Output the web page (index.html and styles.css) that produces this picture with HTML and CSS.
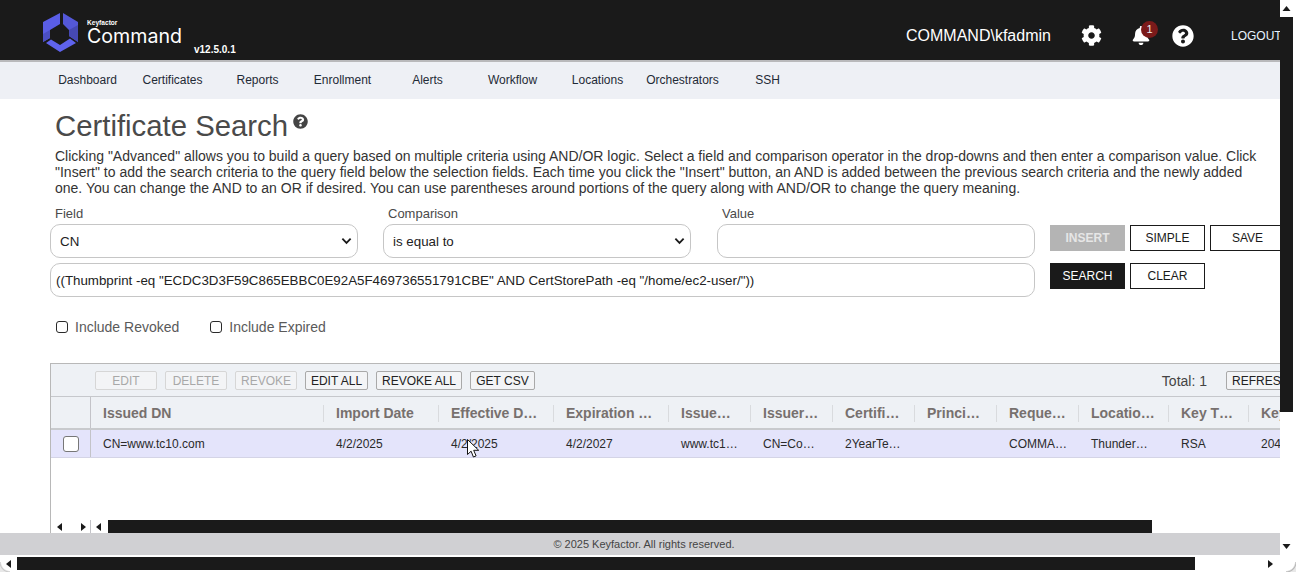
FILE: index.html
```html
<!DOCTYPE html>
<html lang="en">
<head>
<meta charset="utf-8">
<title>Certificate Search</title>
<link rel="stylesheet" href="styles.css">
</head>
<body>
<svg class="defs" width="0" height="0" aria-hidden="true">
  <symbol id="i-help" viewBox="0 0 512 512"><path d="M504 256c0 136.997-111.043 248-248 248S8 392.997 8 256C8 119.083 119.043 8 256 8s248 111.083 248 248zM262.655 90c-54.497 0-89.255 22.957-116.549 63.758-3.536 5.286-2.353 12.415 2.715 16.258l34.699 26.31c5.205 3.947 12.621 3.008 16.665-2.122 17.864-22.658 30.113-35.797 57.303-35.797 20.429 0 45.698 13.148 45.698 32.958 0 14.976-12.363 22.667-32.534 33.976C247.128 238.528 216 254.941 216 296v4c0 6.627 5.373 12 12 12h56c6.627 0 12-5.373 12-12v-1.333c0-28.462 83.186-29.647 83.186-106.667 0-58.002-60.165-102-116.531-102zM256 338c-25.365 0-46 20.635-46 46 0 25.364 20.635 46 46 46s46-20.636 46-46c0-25.365-20.635-46-46-46z"/></symbol>
</svg>
<div class="window">
  <div class="main">
    <header class="topbar">
      <div class="brand">
        <svg class="logo" viewBox="0 0 36 40" aria-hidden="true">
          <polygon points="18,1 18,12 8,18 8,26 1,30 1,10" fill="#5a5ee6"/>
          <polygon points="1,22 8,18 8,26 1,30" fill="#4b4fc4"/>
          <polygon points="21,1 36,10 36,30 27,24 27,18 21,12" fill="#5458d8"/>
          <polygon points="27,18 36,13 36,30 27,24" fill="#4649b4"/>
          <polygon points="4,31 9,27.5 18,33 28,26.5 34,31 18,40" fill="#5f63ee"/>
        </svg>
        <div class="wordmark">
          <span class="wm-small">Keyfactor</span>
          <span class="wm-big">Command</span>
        </div>
        <span class="version">v12.5.0.1</span>
      </div>
      <div class="userbar">
        <span class="username">COMMAND\kfadmin</span>
        <svg class="ico-gear" viewBox="0 0 512 512" aria-hidden="true"><path d="M487.4 315.7l-42.6-24.6c4.3-23.2 4.3-47 0-70.2l42.6-24.6c4.9-2.8 7.1-8.6 5.5-14-11.1-35.6-30-67.8-54.7-94.6-3.8-4.1-10-5.1-14.8-2.3L380.8 110c-17.9-15.4-38.5-27.3-60.8-35.1V25.8c0-5.6-3.9-10.5-9.4-11.7-36.7-8.2-74.3-7.8-109.2 0-5.5 1.2-9.4 6.1-9.4 11.7V75c-22.2 7.9-42.8 19.8-60.8 35.1L88.7 85.5c-4.9-2.8-11-1.9-14.8 2.3-24.7 26.7-43.6 58.9-54.7 94.6-1.7 5.4.6 11.2 5.5 14L67.3 221c-4.3 23.2-4.3 47 0 70.2l-42.6 24.6c-4.9 2.8-7.1 8.6-5.5 14 11.1 35.6 30 67.8 54.7 94.6 3.8 4.1 10 5.1 14.8 2.3l42.6-24.6c17.9 15.4 38.5 27.3 60.8 35.1v49.2c0 5.6 3.9 10.5 9.4 11.7 36.7 8.2 74.3 7.8 109.2 0 5.5-1.2 9.4-6.1 9.4-11.7v-49.2c22.2-7.9 42.8-19.8 60.8-35.1l42.6 24.6c4.9 2.8 11 1.9 14.8-2.3 24.7-26.7 43.6-58.9 54.7-94.6 1.5-5.5-.7-11.3-5.6-14.1zM256 336c-44.1 0-80-35.9-80-80s35.9-80 80-80 80 35.9 80 80-35.9 80-80 80z"/></svg>
        <span class="bell">
          <svg class="ico-bell" viewBox="0 0 448 512" aria-hidden="true"><path d="M224 512c35.32 0 63.97-28.65 63.97-64H160.03c0 35.35 28.65 64 63.97 64zm215.39-149.71c-19.32-20.76-55.47-51.99-55.47-154.29 0-77.7-54.48-139.9-127.94-155.16V32c0-17.67-14.32-32-31.98-32s-31.98 14.33-31.98 32v20.84C118.56 68.1 64.08 130.3 64.08 208c0 102.3-36.15 133.53-55.47 154.29-6 6.45-8.66 14.16-8.61 21.71.11 16.4 12.98 32 32.1 32h383.8c19.12 0 32-15.6 32.1-32 .05-7.55-2.61-15.27-8.61-21.71z"/></svg>
          <span class="badge">1</span>
        </span>
        <svg class="ico-help"><use href="#i-help"/></svg>
        <span class="logout">LOGOUT</span>
      </div>
    </header>
    <nav class="nav">
      <a>Dashboard</a><a>Certificates</a><a>Reports</a><a>Enrollment</a><a>Alerts</a><a>Workflow</a><a>Locations</a><a>Orchestrators</a><a>SSH</a>
    </nav>
    <main class="content">
      <div class="intro">
        <h1 class="title">Certificate Search<svg class="title-help"><use href="#i-help"/></svg></h1>
        <p class="desc">Clicking "Advanced" allows you to build a query based on multiple criteria using AND/OR logic. Select a field and comparison operator in the drop-downs and then enter a comparison value. Click "Insert" to add the search criteria to the query field below the selection fields. Each time you click the "Insert" button, an AND is added between the previous search criteria and the newly added one. You can change the AND to an OR if desired. You can use parentheses around portions of the query along with AND/OR to change the query meaning.</p>
      </div>
      <div class="form">
        <div class="fields">
          <label class="fld-label">Field</label>
          <label class="fld-label">Comparison</label>
          <label class="fld-label">Value</label>
          <div class="ctl ctl-select"><span>CN</span><svg class="chev" viewBox="0 0 12 8" aria-hidden="true"><path d="M1.5 1.5 6 6l4.5-4.5" fill="none" stroke="#1a1a1a" stroke-width="2"/></svg></div>
          <div class="ctl ctl-select"><span>is equal to</span><svg class="chev" viewBox="0 0 12 8" aria-hidden="true"><path d="M1.5 1.5 6 6l4.5-4.5" fill="none" stroke="#1a1a1a" stroke-width="2"/></svg></div>
          <div class="ctl ctl-value"></div>
          <div class="ctl ctl-query">((Thumbprint -eq "ECDC3D3F59C865EBBC0E92A5F469736551791CBE" AND CertStorePath -eq "/home/ec2-user/"))</div>
        </div>
        <div class="actions">
          <button class="btn btn-off">INSERT</button>
          <button class="btn">SIMPLE</button>
          <button class="btn">SAVE</button>
          <button class="btn btn-dark">SEARCH</button>
          <button class="btn">CLEAR</button>
        </div>
      </div>
      <div class="checks">
        <label class="chk"><span class="box"></span>Include Revoked</label>
        <label class="chk"><span class="box"></span>Include Expired</label>
      </div>
      <section class="grid">
        <div class="toolbar">
          <button class="tb tb-off">EDIT</button>
          <button class="tb tb-off">DELETE</button>
          <button class="tb tb-off">REVOKE</button>
          <button class="tb tb-w1">EDIT ALL</button>
          <button class="tb tb-w2">REVOKE ALL</button>
          <button class="tb tb-w3">GET CSV</button>
          <span class="total">Total: 1</span>
          <button class="tb tb-refresh">REFRESH</button>
        </div>
        <div class="cols head">
          <div class="cell-check"></div>
          <div class="th">Issued DN</div>
          <div class="th">Import Date</div>
          <div class="th">Effective D…</div>
          <div class="th">Expiration …</div>
          <div class="th">Issue…</div>
          <div class="th">Issuer…</div>
          <div class="th">Certifi…</div>
          <div class="th">Princi…</div>
          <div class="th">Reque…</div>
          <div class="th">Locatio…</div>
          <div class="th">Key T…</div>
          <div class="th">Key</div>
        </div>
        <div class="cols row">
          <div class="cell-check"><span class="rowbox"></span></div>
          <div class="td td-first">CN=www.tc10.com</div>
          <div class="td">4/2/2025</div>
          <div class="td">4/2/2025</div>
          <div class="td">4/2/2027</div>
          <div class="td">www.tc1…</div>
          <div class="td">CN=Co…</div>
          <div class="td">2YearTe…</div>
          <div class="td"></div>
          <div class="td">COMMA…</div>
          <div class="td">Thunder…</div>
          <div class="td">RSA</div>
          <div class="td">2048</div>
        </div>
        <div class="grid-space"></div>
        <div class="grid-scroll">
          <div class="gs-pager">
            <svg class="tri" viewBox="0 0 6 8"><path d="M5 0v8L0 4z"/></svg>
            <svg class="tri" viewBox="0 0 6 8"><path d="M1 0v8l5-4z"/></svg>
          </div>
          <div class="gs-left"><svg class="tri" viewBox="0 0 6 8"><path d="M5 0v8L0 4z"/></svg></div>
          <div class="gs-thumb"></div>
        </div>
      </section>
      <svg class="cursor" viewBox="0 0 12 19" aria-hidden="true"><path d="M.5.5v15l3.6-3.3 2.3 5.8 2.7-1.1-2.4-5.6h5z" fill="#fff" stroke="#111" stroke-width="1"/></svg>
    </main>
    <footer class="footer">© 2025 Keyfactor. All rights reserved.</footer>
  </div>
  <aside class="vscroll">
    <svg class="arrow-v" viewBox="0 0 8 5"><path d="M0 5h8L4 0z"/></svg>
    <div class="v-thumb"></div>
    <svg class="arrow-v" viewBox="0 0 8 5"><path d="M0 0h8L4 5z"/></svg>
  </aside>
  <div class="hscroll">
    <svg class="arrow-h" viewBox="0 0 5 8"><path d="M5 0v8L0 4z"/></svg>
    <div class="h-thumb"></div>
    <svg class="arrow-h" viewBox="0 0 5 8"><path d="M0 0v8l5-4z"/></svg>
  </div>
  <div class="corner corner-l"></div>
  <div class="corner corner-r"></div>
</div>
</body>
</html>
```

FILE: styles.css
```css
* { box-sizing: border-box; }
html, body { margin: 0; padding: 0; height: 100%; overflow: hidden; background: #fff; }
body { font-family: "Liberation Sans", Arial, sans-serif; color: #333; }
.defs { display: block; height: 0; }

.window {
  position: relative;
  display: grid;
  grid-template-columns: 1280px 16px;
  grid-template-rows: 555px 17px;
  width: 1296px;
  height: 572px;
}
.main { display: flex; flex-direction: column; overflow: hidden; min-width: 0; }

/* Top bar */
.topbar {
  flex: none;
  height: 62px;
  background: #1a1a1a;
  border-bottom: 2px solid #b9b9bb;
  display: flex;
  justify-content: space-between;
  color: #fff;
  width: 1296px;
}
.brand { display: flex; padding-left: 42px; }
.logo { width: 36px; height: 40px; margin-top: 12px; }
.wordmark { display: flex; flex-direction: column; margin-left: 9px; padding-top: 19px; width: 107px; }
.wm-small { font-size: 6.6px; line-height: 7px; font-weight: bold; }
.wm-big { font-size: 19.6px; line-height: 20px; font-family: Inter, "Liberation Sans", sans-serif; }
.version { font-size: 10px; font-weight: bold; margin-top: 44px; line-height: 12px; }
.userbar { display: flex; align-items: center; height: 70px; width: 400px; flex: none; }
.username { font-size: 16px; margin: 1px 0 0 10px; width: 175px; flex: none; }
.ico-gear { width: 21px; height: 21px; fill: #fff; flex: none; }
.bell { position: relative; display: block; width: 18px; height: 19px; margin: 1px 0 0 30px; flex: none; }
.ico-bell { width: 18px; height: 19px; fill: #fff; display: block; }
.badge {
  position: absolute; left: 9px; top: -5px;
  width: 17px; height: 17px; border-radius: 50%;
  background: #7b1a1a; color: #eee; font-size: 11px; line-height: 17px; text-align: center;
}
.ico-help { width: 22px; height: 22px; fill: #fff; margin: 1px 0 0 22px; flex: none; }
.logout { font-size: 12px; margin: 1px 0 0 37px; color: #e8f4ff; flex: none; }

/* Nav */
.nav {
  flex: none;
  height: 37px;
  background: #eef0f5;
  padding: 0 0 2px 45px;
  display: flex;
  align-items: center;
}
.nav a { width: 85px; text-align: center; font-size: 12px; color: #1f2a36; white-space: nowrap; }

/* Content */
.content { position: relative; flex: 1; min-height: 0; padding-left: 50px; display: flex; flex-direction: column; width: 1280px; overflow: hidden; }
.intro { padding: 10px 15px 0 5px; }
.title { margin: 0; font-size: 29.33px; font-weight: normal; line-height: 34px; color: #4a4a4a; display: flex; }
.title-help { width: 15px; height: 15px; fill: #444; margin: 5px 0 0 5px; }
.desc { margin: 5px 0 0; font-size: 14px; line-height: 16px; color: #333; width: 1215px; }

.form { display: flex; margin-top: 9px; width: 1240px; }
.fields { display: grid; grid-template-columns: 333px 334px 318px; grid-template-rows: 14px 34px 34px; row-gap: 5px; width: 985px; }
.fld-label { font-size: 13px; line-height: 16px; color: #4a4a4a; padding: 1px 0 0 5px; align-self: start; }
.ctl { border: 1px solid #c6c6c6; border-radius: 10px; background: #fff; height: 34px; display: flex; align-items: center; font-size: 13.33px; color: #222; }
.ctl-select { width: 308px; padding: 0 0 0 9px; justify-content: space-between; }
.chev { width: 11px; height: 8px; margin-right: 5px; }
.ctl-query { grid-column: 1 / 4; padding-left: 5px; white-space: nowrap; }

.actions { display: grid; grid-template-columns: repeat(3, 75px); grid-auto-rows: 26px; column-gap: 5px; row-gap: 12px; margin: 20px 0 0 15px; align-content: start; }
.btn { border: 1px solid #1a1a1a; background: #fff; color: #1a1a1a; font: 12px "Liberation Sans", sans-serif; padding: 0; }
.btn-off { background: #b4b4b4; border-color: #b4b4b4; color: #e6e6e6; font-weight: bold; }
.btn-dark { background: #1a1a1a; color: #fff; }

.checks { display: flex; margin: 22px 0 0 6px; gap: 31px; height: 16px; }
.chk { display: flex; align-items: center; font-size: 14px; color: #5a5a5a; }
.box { width: 12px; height: 12px; border: 1.5px solid #2a2a2a; border-radius: 3px; margin-right: 7px; background: #fff; }

/* Grid */
.grid { margin-top: 28px; flex: 1; min-height: 0; width: 1240px; border-top: 1px solid #b8b8b8; border-left: 1px solid #b8b8b8; display: flex; flex-direction: column; }
.toolbar { flex: none; height: 33px; background: #eef1f5; border-bottom: 1px solid #c6c8cc; display: flex; align-items: center; padding: 1px 0 0 44px; gap: 8px; }
.tb { height: 19px; font: 12px "Liberation Sans", sans-serif; padding: 0; border: 1px solid #a9a9a9; border-radius: 2px; background: #f3f4f6; color: #222; }
.tb-off { width: 62px; color: #a8a8a8; border-color: #d6d6d6; }
.tb-w1 { width: 63px; }
.tb-w2 { width: 86px; }
.tb-w3 { width: 65px; }
.total { font-size: 14px; margin-left: auto; color: #444; margin-right: 11px; }
.tb-refresh { width: 64px; flex: none; text-align: left; padding-left: 5px; overflow: hidden; white-space: nowrap; }
.cols { display: grid; grid-template-columns: 40px 232px 115px 115px 115px 82px 82px 82px 82px 82px 90px 80px 60px; flex: none; }
.head { height: 33px; background: #eef1f5; border-bottom: 2px solid #c8cacd; align-items: center; padding-top: 1px; }
.head .cell-check { margin-top: -1px; height: calc(100% + 1px); }
.th { font-size: 14px; font-weight: bold; color: #77706e; padding-left: 12px; border-left: 1px solid #d9dbde; height: 17px; line-height: 17px; white-space: nowrap; }
.head .th:nth-child(2) { border-left-color: transparent; padding-left: 11px; }
.cell-check { border-right: 1px solid #c3c3c8; height: 100%; display: flex; align-items: center; justify-content: center; }
.row { height: 28px; background: #e4e4fb; border-bottom: 1px solid #d4d4e6; align-items: center; }
.td { font-size: 12px; color: #2a2a2a; padding-left: 13px; white-space: nowrap; }
.td-first { padding-left: 12px; }
.rowbox { width: 16px; height: 16px; border: 1px solid #777; border-radius: 3px; background: #fff; }
.grid-space { flex: 1; min-height: 0; background: #fff; }
.grid-scroll { flex: none; height: 13px; display: flex; align-items: center; }
.gs-pager { width: 40px; height: 100%; border-right: 1px solid #c3c3c8; display: flex; align-items: center; padding-left: 6px; gap: 17px; }
.gs-left { width: 17px; height: 100%; display: flex; align-items: center; padding-left: 5px; }
.tri { width: 6px; height: 8px; fill: #1a1a1a; flex: none; }
.gs-thumb { width: 1044px; height: 13px; background: #1a1a1a; flex: none; }
.cursor { position: absolute; left: 467px; top: 340px; width: 12px; height: 19px; }

.footer { flex: none; height: 22px; background: #d0d0d3; font-size: 11px; line-height: 22px; text-align: center; color: #444; padding-left: 8px; }

/* Window scrollbars */
.vscroll { grid-row: 1; grid-column: 2; background: #fff; display: flex; flex-direction: column; align-items: flex-start; }
.arrow-v { width: 9px; height: 5px; fill: #1a1a1a; flex: none; margin: 6px 0 6px 2px; }
.arrow-v:last-child { margin-top: 132px; }
.v-thumb { width: 13px; height: 395px; background: #1a1a1a; flex: none; }
.hscroll { grid-row: 2; grid-column: 1 / 3; display: flex; align-items: center; padding-left: 6px; height: 17px; background: #fff; }
.arrow-h { width: 5px; height: 8px; fill: #1a1a1a; flex: none; }
.h-thumb { width: 1178px; height: 13px; background: #1a1a1a; margin: 0 73px 0 6px; flex: none; }

/* Rounded window corners over the page */
.corner { position: absolute; bottom: 0; width: 10px; height: 10px; }
.corner-l { left: 0; background: radial-gradient(circle at 100% 0, transparent 8.5px, #c9c9c9 10px, #e8e8e8 11px); }
.corner-r { right: 0; background: radial-gradient(circle at 0 0, transparent 8.5px, #b5b5b5 10px, #e8e8e8 11px); }
```
